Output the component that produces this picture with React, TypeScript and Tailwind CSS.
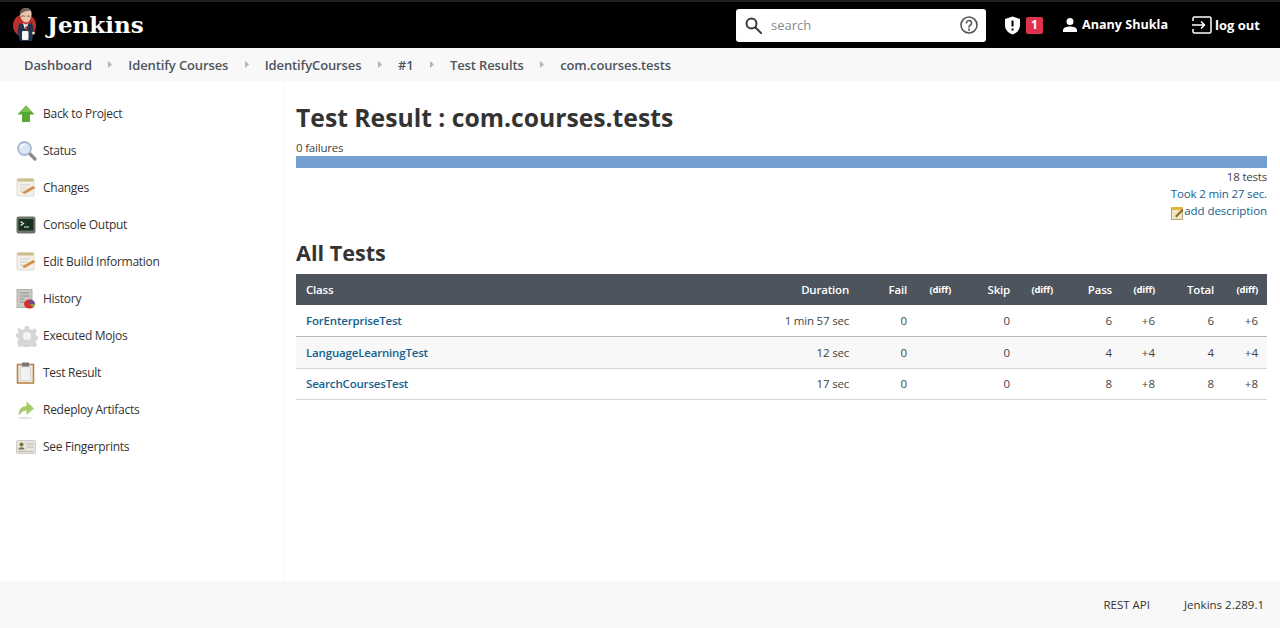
import React from "react";

const crumbs = ["Dashboard", "Identify Courses", "IdentifyCourses", "#1", "Test Results", "com.courses.tests"];

function JenkinsLogo() {
  return (
    <svg width="26" height="34" viewBox="0 0 26 34">
      <circle cx="12.500" cy="17.500" r="11.500" fill="#c0302a" />
      <path d="M8 6c0-4 3-6 6-6 4 0 6 3 5.500 7-.5 4-2.500 7.500-5.500 7.500S8 10 8 6z" fill="#e9c6ab" />
      <path d="M8 7C7 3 10 0 14 0c2.500 0 4.500 1.500 5 3-4-.5-8 0-11 4z" fill="#6a6058" />
      <path d="M9 8.500c1.500-.8 3-.8 4 0M15 8.500c1-.6 2-.6 3 0" stroke="#5a4436" strokeWidth="0.800" fill="none" />
      <path d="M7 15c3 1.500 9 1.500 13-.5l2 8-2 10.500H8L5.500 24z" fill="#22344f" />
      <path d="M11 15l3 1.500 2.500-1.500-2 5.500h-2z" fill="#efefef" />
      <path d="M13 19l1.500-1 1 1-1 4z" fill="#b23a34" />
      <rect x="10" y="23" width="6.500" height="9" rx="1" fill="#f6f6f6" />
      <circle cx="21.500" cy="25" r="1.500" fill="#f0d5bf" />
    </svg>
  );
}

function ArrowIcon() {
  return (
    <svg width="20" height="20" viewBox="0 0 20 20">
      <path d="M10 1.500l8.500 9H14v7.500H6v-7.500H1.500z" fill="#56a832" />
      <path d="M10 1.500l6 6.500H4z" fill="#7cc24a" />
    </svg>
  );
}

function SearchIcon() {
  return (
    <svg width="22" height="22" viewBox="0 0 22 22">
      <path d="M12.500 12.500l6.500 6.500" stroke="#8e8a80" strokeWidth="3.200" strokeLinecap="round" />
      <circle cx="8.500" cy="8.500" r="6.500" fill="#dbe6f5" stroke="#a7b9d4" strokeWidth="1.800" />
      <path d="M4.500 7.500c.5-2 2-3 4-3" stroke="#fff" strokeWidth="1.500" fill="none" />
    </svg>
  );
}

function NotepadIcon() {
  return (
    <svg width="21" height="21" viewBox="0 0 21 21">
      <rect x="1" y="2" width="17" height="17" rx="1" fill="#f2f0e8" stroke="#dcdad2" />
      <rect x="1.500" y="1.500" width="16" height="3" fill="#cdbd8c" />
      <path d="M4 8h10M4 11h7M4 14h4" stroke="#d2cfc4" />
      <path d="M6 15.500l11-6.500 2.500 2-11 6z" fill="#d28f45" />
    </svg>
  );
}

function ConsoleIcon() {
  return (
    <svg width="20" height="18" viewBox="0 0 20 18">
      <rect x="0.500" y="0.500" width="19" height="17" rx="2" fill="#6d7369" />
      <rect x="2.500" y="3" width="15" height="11.500" fill="#17301f" />
      <path d="M4.500 5.500l3 2-3 2M8 11h5" stroke="#e4efe2" strokeWidth="1.200" fill="none" />
    </svg>
  );
}

function HistoryIcon() {
  return (
    <svg width="20" height="20" viewBox="0 0 20 20">
      <rect x="1" y="0.500" width="15" height="18" fill="#cbc9c4" stroke="#b3b1ac" />
      <path d="M3.500 4h10M3.500 7h10M3.500 10h5M3.500 13h5" stroke="#94928e" />
      <ellipse cx="13.500" cy="15" rx="5.500" ry="4.500" fill="#d42f2c" />
      <path d="M13.500 15v-4.500a5.500 4.500 0 0 1 5.500 4.500z" fill="#6b4f9a" />
      <path d="M13.500 15l5.500 0a5.500 4.500 0 0 1-2 3.500z" fill="#8aa23c" />
    </svg>
  );
}

function GearIcon() {
  return (
    <svg width="22" height="22" viewBox="0 0 22 22">
      <path
        d="M9 1h4l.5 3 2.500 1 2.500-1.700 2.700 2.700-1.700 2.500 1 2.500 3 .5v3l-3 .5-1 2.500 1.700 2.500-2.700 2.700-2.500-1.700-2.500 1-.5 2.500H9l-.5-2.500-2.500-1-2.500 1.700L.8 17.300 2.500 14.800l-1-2.500-1.500-.3v-3l1.500-.5 1-2.500L.8 3.500 3.500 3.300 6 5l2.500-1z"
        fill="#d6d6d6"
      />
      <circle cx="11" cy="11" r="4" fill="#f4f4f4" />
    </svg>
  );
}

function ClipboardIcon() {
  return (
    <svg width="20" height="22" viewBox="0 0 20 22">
      <rect x="1.500" y="2.500" width="16" height="18.500" fill="#ece9df" stroke="#b98346" strokeWidth="1.600" />
      <rect x="4.500" y="5" width="10" height="13.500" fill="#f1f1ee" stroke="#cacac6" strokeWidth="0.600" />
      <rect x="6" y="0.500" width="7" height="4" fill="#777" />
    </svg>
  );
}

function RedeployIcon() {
  return (
    <svg width="20" height="20" viewBox="0 0 20 20">
      <ellipse cx="9" cy="18" rx="7" ry="1.500" fill="#e6e6e6" />
      <path d="M3 15.500c-1-6 3-9.500 7.500-9.500V1.500l7.500 7-7.500 6.500v-4.500c-3.500 0-5.500 2-7.500 5z" fill="#a8cb66" />
    </svg>
  );
}

function FingerprintIcon() {
  return (
    <svg width="20" height="14" viewBox="0 0 20 14">
      <rect x="0.500" y="0.500" width="19" height="13" rx="1" fill="#e6e5de" stroke="#cfcec6" />
      <circle cx="5.500" cy="4.500" r="2" fill="#7c7440" />
      <path d="M2.500 9.500c0-3 6-3 6 0z" fill="#7c7440" />
      <path d="M10.500 4h7M10.500 7h7M2 11.500h16" stroke="#bcbbb3" />
    </svg>
  );
}

const tasks: [string, React.ReactNode][] = [
  ["Back to Project", <ArrowIcon />],
  ["Status", <SearchIcon />],
  ["Changes", <NotepadIcon />],
  ["Console Output", <ConsoleIcon />],
  ["Edit Build Information", <NotepadIcon />],
  ["History", <HistoryIcon />],
  ["Executed Mojos", <GearIcon />],
  ["Test Result", <ClipboardIcon />],
  ["Redeploy Artifacts", <RedeployIcon />],
  ["See Fingerprints", <FingerprintIcon />],
];

const rows = [
  { name: "ForEnterpriseTest", time: "1 min 57 sec", pass: "6" },
  { name: "LanguageLearningTest", time: "12 sec", pass: "4" },
  { name: "SearchCoursesTest", time: "17 sec", pass: "8" },
];

export default function App() {
  return (
    <div className="flex h-[628px] flex-col overflow-hidden bg-white font-['Open_Sans',sans-serif] text-[#333]">
      <header className="flex h-[48px] shrink-0 items-center border-t-2 border-[#222] bg-black pr-[20px] text-white">
        <div className="ml-[12px] flex items-center gap-[9px]">
          <JenkinsLogo />
          <span className="font-['DejaVu_Serif',serif] text-[23px] font-bold">Jenkins</span>
        </div>
        <div className="ml-auto flex h-[33px] w-[250px] items-center rounded-[3px] bg-white pl-[9px] pr-[7px]">
          <svg width="17" height="17" viewBox="0 0 17 17" fill="none" stroke="#3a3a3a" strokeWidth="2">
            <circle cx="6.500" cy="6.500" r="5" />
            <path d="M10.500 10.500l5.500 5.500" strokeLinecap="round" />
          </svg>
          <span className="ml-[9px] pt-[1px] text-[13px] text-[#8a8a8a]">search</span>
          <svg className="ml-auto" width="20" height="20" viewBox="0 0 20 20" fill="none" stroke="#555" strokeWidth="1.600">
            <circle cx="10" cy="10" r="8" />
            <path d="M7.500 8a2.500 2.500 0 1 1 3.800 2.100c-.9.600-1.300 1-1.300 2" strokeLinecap="round" />
            <path d="M10 14v1.300" strokeLinecap="round" />
          </svg>
        </div>
        <svg className="ml-[18px]" width="17" height="19" viewBox="0 0 17 19">
          <path d="M8.500 0.500L16 3v6c0 4.500-3 8-7.500 9.500C4 17 1 13.500 1 9V3z" fill="#fff" />
          <path d="M8.500 4.500v6M8.500 12.500v2" stroke="#000" strokeWidth="2" />
        </svg>
        <span className="ml-[5px] flex h-[17px] w-[17px] items-center justify-center rounded-[2px] bg-[#e0324a] text-[12px] font-bold">1</span>
        <svg className="ml-[19px]" width="16" height="16" viewBox="0 0 16 16" fill="#fff">
          <circle cx="8" cy="4.500" r="3.500" />
          <path d="M1 15v-2c0-2.500 4-3.500 7-3.500s7 1 7 3.500v2z" />
        </svg>
        <span className="ml-[4px] pt-[1px] text-[12.600px] font-bold">Anany Shukla</span>
        <svg className="ml-[24px]" width="20" height="18" viewBox="0 0 20 18" fill="none" stroke="#fff" strokeWidth="1.500">
          <path d="M1 5V2.500A1.500 1.500 0 0 1 2.500 1h15A1.500 1.500 0 0 1 19 2.500v13a1.500 1.500 0 0 1-1.500 1.500h-15A1.500 1.500 0 0 1 1 15.500V13" />
          <path d="M0 9h12M9 5.500L12.500 9 9 12.500" />
        </svg>
        <span className="ml-[3px] pt-[1px] text-[13px] font-bold">log out</span>
      </header>

      <nav className="flex h-[33px] shrink-0 items-center bg-[#f8f8f8] pl-[24px] pt-[2px] text-[13px] font-semibold tracking-[-0.12px] text-[#4d545d]">
        {crumbs.map((c, i) => (
          <React.Fragment key={c}>
            {i > 0 && (
              <span className="flex w-[36.500px] justify-center pb-[2px]">
                <svg width="4" height="7" viewBox="0 0 4 7">
                  <path d="M0 0l4 3.500L0 7z" fill="#b5b5b5" />
                </svg>
              </span>
            )}
            <span>{c}</span>
          </React.Fragment>
        ))}
      </nav>

      <div className="flex min-h-0 flex-1">
        <aside className="w-[284px] shrink-0 border-r border-[#f6f6f6] pl-[16px] pt-[14px]">
          {tasks.map(([label, icon]) => (
            <div key={label} className="flex h-[37px] items-center text-[12px] tracking-[-0.27px] text-[#333]">
              <span className="flex w-[27px] shrink-0 items-center">{icon}</span>
              <span>{label}</span>
            </div>
          ))}
        </aside>

        <main className="min-w-0 flex-1 pl-[12px] pr-[13px] pt-[19px]">
          <h1 className="text-[24.700px] font-bold leading-[36px] text-[#333]">Test Result : com.courses.tests</h1>
          <div className="mt-[3px] text-[11.500px] leading-[17px] tracking-[-0.2px] text-[#444]">0 failures</div>
          <div className="h-[12px] bg-[#729fcf]" />
          <div className="text-right text-[11.500px] leading-[17px] tracking-[-0.2px] text-[#444]">18 tests</div>
          <div className="text-right text-[11.500px] leading-[18px] tracking-[-0.15px] text-[#14618f]">Took 2 min 27 sec.</div>
          <div className="flex h-[16px] items-center justify-end text-[11.500px] tracking-[-0.05px] text-[#14618f]">
            <svg className="mt-[3px]" width="13" height="14" viewBox="0 0 13 14">
              <rect x="0.500" y="2" width="11" height="11.500" fill="#f2e8c4" stroke="#b3a57a" />
              <rect x="0.500" y="1" width="11" height="3" fill="#e3b23c" />
              <path d="M4 10l7-7 1.500 1.500-7 7z" fill="#8c6b2f" />
            </svg>
            <span>add description</span>
          </div>

          <h2 className="mt-[18px] text-[21.600px] font-bold leading-[32px] text-[#333]">All Tests</h2>

          <table className="mt-[5px] w-full table-fixed border-collapse text-[11.500px] text-[#444]">
            <thead>
              <tr className="h-[31px] bg-[#4d545d] font-semibold tracking-[-0.2px] text-white">
                <th className="pl-[10px] text-left font-semibold">Class</th>
                <th className="w-[160px] pr-[10px] text-right font-semibold">Duration</th>
                <th className="w-[58px] pr-[10px] text-right font-semibold">Fail</th>
                <th className="w-[44px] pr-[10px] pt-[2px] text-right text-[9.500px] font-bold">(diff)</th>
                <th className="w-[59px] pr-[10px] text-right font-semibold">Skip</th>
                <th className="w-[43px] pr-[10px] pt-[2px] text-right text-[9.500px] font-bold">(diff)</th>
                <th className="w-[59px] pr-[10px] text-right font-semibold">Pass</th>
                <th className="w-[43px] pr-[10px] pt-[2px] text-right text-[9.500px] font-bold">(diff)</th>
                <th className="w-[59px] pr-[10px] text-right font-semibold">Total</th>
                <th className="w-[43px] pr-[9px] pt-[2px] text-right text-[9.500px] font-bold">(diff)</th>
              </tr>
            </thead>
            <tbody>
              {rows.map((r, i) => (
                <tr key={r.name} className={`h-[31.500px] border-b ${i === 0 ? "border-[#b4b9bf]" : "border-[#d3d7da]"} ${i === 1 ? "bg-[#f8f8f8]" : ""}`}>
                  <td className="pl-[10px] font-semibold tracking-[-0.18px] text-[#14618f]">{r.name}</td>
                  <td className="pr-[10px] text-right tracking-[-0.2px]">{r.time}</td>
                  <td className="pr-[10px] text-right">0</td>
                  <td />
                  <td className="pr-[10px] text-right">0</td>
                  <td />
                  <td className="pr-[10px] text-right">{r.pass}</td>
                  <td className="pr-[10px] text-right">+{r.pass}</td>
                  <td className="pr-[10px] text-right">{r.pass}</td>
                  <td className="pr-[9px] text-right">+{r.pass}</td>
                </tr>
              ))}
            </tbody>
          </table>
        </main>
      </div>

      <footer className="flex h-[47px] shrink-0 items-center justify-end bg-[#f8f8f8] pr-[16px] text-[11.500px] text-[#333]">
        <span>REST API</span>
        <span className="ml-[34px]">Jenkins 2.289.1</span>
      </footer>
    </div>
  );
}
